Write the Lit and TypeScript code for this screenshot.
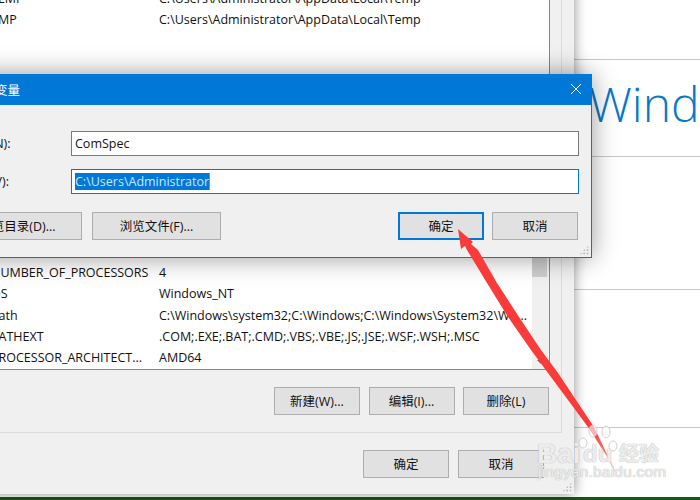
import { LitElement, html, css, svg } from "lit";
import { customElement } from "lit/decorators.js";

const upperRows = [
  ["TEMP", "C:\\Users\\Administrator\\AppData\\Local\\Temp"],
  ["TMP", "C:\\Users\\Administrator\\AppData\\Local\\Temp"],
];
const lowerRows = [
  ["NUMBER_OF_PROCESSORS", "4"],
  ["OS", "Windows_NT"],
  ["Path", "C:\\Windows\\system32;C:\\Windows;C:\\Windows\\System32\\Wb..."],
  ["PATHEXT", ".COM;.EXE;.BAT;.CMD;.VBS;.VBE;.JS;.JSE;.WSF;.WSH;.MSC"],
  ["PROCESSOR_ARCHITECT...", "AMD64"],
];

@customElement("app-root")
export class AppRoot extends LitElement {
  static styles = css`
    :host {
      display: block;
      position: relative;
      width: 700px;
      height: 500px;
      overflow: hidden;
      background: #fff;
      font-family: "Open Sans", "Noto Sans CJK SC", sans-serif;
      font-size: 12.5px;
      color: #111;
    }
    .desktop { position: absolute; inset: 0; display: flex; flex-direction: column; }
    .panel { flex: 1; display: flex; flex-direction: column; padding-left: 574px; min-height: 0; }
    .band { border-bottom: 1px solid #c8c8c8; box-sizing: border-box; }
    .b1 { height: 60px; }
    .b2 { height: 97px; overflow: hidden; white-space: nowrap; }
    .b3 { height: 133px; }
    .b4 { height: 138px; }
    .hero {
      display: block;
      margin: 12px 0 0 15px;
      font-family: "Open Sans", sans-serif;
      font-weight: 300;
      font-size: 48px;
      line-height: 64px;
      color: #0a78c8;
    }
    .taskbar { height: 3px; background: #155a0f; flex: none; }

    .window {
      position: absolute;
      box-sizing: border-box;
      background: #f0f0f0;
    }
    .back {
      left: -23px;
      top: -60px;
      width: 597px;
      height: 554px;
      padding: 0 12px 0 0;
      box-shadow: 0 0 12px rgba(0, 0, 0, 0.45);
      display: flex;
      flex-direction: column;
    }
    .group { border: 1px solid #dcdcdc; border-left: none; box-sizing: border-box; }
    .g1 { height: 226px; padding: 0 11px 0 0; }
    .g2 { height: 255px; margin-top: 12px; padding: 11px 11px 0 0; }
    .list {
      background: #fff;
      border: 1px solid #828790;
      border-left: none;
      box-sizing: border-box;
      display: flex;
    }
    .g1 .list { height: 210px; padding-top: 46px; flex-direction: column; }
    .g2 .list { height: 180px; }
    .rows { flex: 1; min-width: 0; display: flex; flex-direction: column; justify-content: flex-end; padding-bottom: 1px; }
    .row { display: flex; height: 21.2px; align-items: center; white-space: nowrap; }
    .name { width: 182px; padding-left: 14px; box-sizing: border-box; flex: none; }
    .scroll { width: 17px; flex: none; background: #f0f0f0; position: relative; display: flex; flex-direction: column; justify-content: flex-end; }
    .thumb { position: absolute; left: 0; width: 15px; top: 0; height: 86px; background: #cdcdcd; }
    .arrow-dn { align-self: center; margin-bottom: 5px; width: 0; height: 0; border-left: 4px solid transparent; border-right: 4px solid transparent; border-top: 4px solid #606060; }
    .btnrow { display: flex; justify-content: flex-end; gap: 8.5px; margin: 17px 1px 0 0; }
    .btn {
      width: 86px;
      height: 28px;
      box-sizing: border-box;
      border: 1px solid #adadad;
      background: #e1e1e1;
      padding-bottom: 2px;
      display: flex;
      align-items: center;
      justify-content: center;
      white-space: nowrap;
      color: #111;
    }
    .btn.primary { border: 2px solid #0078d7; }
    .btn.wide { width: 129px; }
    .foot { margin: 17px 0 0 0; padding-right: 18px; gap: 9px; }
    .grip {
      position: absolute;
      right: 2px;
      bottom: 2px;
      width: 10px;
      height: 10px;
      background-image: radial-gradient(#b8b8b8 1.1px, transparent 1.2px);
      background-size: 3.4px 3.4px;
      clip-path: polygon(100% 0, 100% 100%, 0 100%);
    }

    .dialog {
      left: -60px;
      top: 74px;
      width: 652px;
      height: 184px;
      border: 1px solid #0078d7;
      box-shadow: 0 0 24px rgba(0, 0, 0, 0.4);
      display: flex;
      flex-direction: column;
    }
    .titlebar {
      height: 30px;
      flex: none;
      background: #0078d7;
      color: #fff;
      display: flex;
      align-items: center;
      justify-content: space-between;
      padding: 0 9px 2px 4px;
      box-sizing: border-box;
    }
    .body { padding: 26px 12px 0 12px; display: flex; flex-direction: column; }
    .field { display: flex; align-items: center; height: 25px; margin-bottom: 13px; }
    .label { width: 118px; flex: none; white-space: nowrap; box-sizing: border-box; padding: 0 62px 2px 0; text-align: right; }
    .input {
      flex: 1;
      height: 25px;
      box-sizing: border-box;
      border: 1px solid #7a7a7a;
      background: #fff;
      padding-left: 3px;
      display: flex;
      align-items: center;
    }
    .input.focus { border-color: #0078d7; }
    .sel { background: #0078d7; color: #cfe6fa; border-right: 1px solid #e87a10; line-height: 17px; }
    .dlgbtns { display: flex; align-items: flex-start; gap: 10px; margin-top: 5px; }
    .spacer { flex: 1; }
    .dlgright { display: flex; gap: 8px; margin-right: 1px; }

    .overlay { position: absolute; left: 0; top: 0; pointer-events: none; }
    .wm { position: absolute; color: rgba(255, 255, 255, 0.72); text-shadow: 0 0 1px #bcbcbc, 0 0 1px #bcbcbc; font-family: "Liberation Sans", "Noto Sans CJK SC", sans-serif; white-space: nowrap; }
    .wm-bai { left: 537px; top: 438px; font-size: 28px; font-weight: 700; }
    .wm-du { left: 583px; top: 440px; font-size: 24px; font-weight: 700; }
    .wm-jy { left: 619px; top: 438px; font-size: 20px; font-weight: 700; }
    .wm-url { left: 538px; top: 463px; font-size: 15.5px; letter-spacing: 0.2px; }
  `;

  private row(r: string[]) {
    return html`<div class="row"><span class="name">${r[0]}</span><span>${r[1]}</span></div>`;
  }

  render() {
    return html`
      <div class="desktop">
        <div class="panel">
          <div class="band b1"></div>
          <div class="band b2"><span class="hero">Windows 10</span></div>
          <div class="band b3"></div>
          <div class="band b4"></div>
        </div>
        <div class="taskbar"></div>
      </div>

      <div class="window back">
        <div class="group g1">
          <div class="list">${upperRows.map((r) => this.row(r))}</div>
        </div>
        <div class="group g2">
          <div class="list">
            <div class="rows">${lowerRows.map((r) => this.row(r))}</div>
            <div class="scroll"><div class="thumb"></div><div class="arrow-dn"></div></div>
          </div>
          <div class="btnrow">
            <div class="btn">新建(W)...</div>
            <div class="btn">编辑(I)...</div>
            <div class="btn">删除(L)</div>
          </div>
        </div>
        <div class="btnrow foot">
          <div class="btn">确定</div>
          <div class="btn">取消</div>
        </div>
        <div class="grip"></div>
      </div>

      <div class="window dialog">
        <div class="titlebar">
          <span>编辑系统变量</span>
          <svg width="12" height="12" viewBox="0 0 12 12"><path d="M1 1 L11 11 M11 1 L1 11" stroke="#fff" stroke-width="1" fill="none" /></svg>
        </div>
        <div class="body">
          <div class="field"><span class="label">变量名(N):</span><div class="input">ComSpec</div></div>
          <div class="field"><span class="label">变量值(V):</span><div class="input focus"><span class="sel">C:\\Users\\Administrator</span></div></div>
          <div class="dlgbtns">
            <div class="btn wide">浏览目录(D)...</div>
            <div class="btn wide">浏览文件(F)...</div>
            <div class="spacer"></div>
            <div class="dlgright">
              <div class="btn primary">确定</div>
              <div class="btn">取消</div>
            </div>
          </div>
        </div>
        <div class="grip"></div>
      </div>

      <svg class="overlay" width="700" height="500" viewBox="0 0 700 500">
        ${svg`
          <defs>
            <linearGradient id="tail" gradientUnits="userSpaceOnUse" x1="0" y1="229" x2="0" y2="479">
              <stop offset="0.8" stop-color="#fb3a3a"></stop>
              <stop offset="1" stop-color="#ffb4b4"></stop>
            </linearGradient>
          </defs>
          <polygon fill="url(#tail)" points="458,229 473,242 471,244 478,250 497,283 519,317 541,350 558,373 594,427 619,479 606,455 588,427 548,373 531,350 508,317 487,283 467,250 465,246 461,249"></polygon>
          <g fill="rgba(255,255,255,0.6)" stroke="#d0d0d0" stroke-width="1">
            <ellipse cx="593" cy="431" rx="4" ry="6"></ellipse>
            <ellipse cx="606" cy="432" rx="4" ry="6"></ellipse>
            <ellipse cx="583" cy="443" rx="4" ry="5"></ellipse>
            <ellipse cx="613" cy="446" rx="4" ry="5"></ellipse>
          </g>
        `}
      </svg>
      <div class="wm wm-bai">Bai</div>
      <div class="wm wm-du">du</div>
      <div class="wm wm-jy">经验</div>
      <div class="wm wm-url">jingyan.baidu.com</div>
    `;
  }
}
